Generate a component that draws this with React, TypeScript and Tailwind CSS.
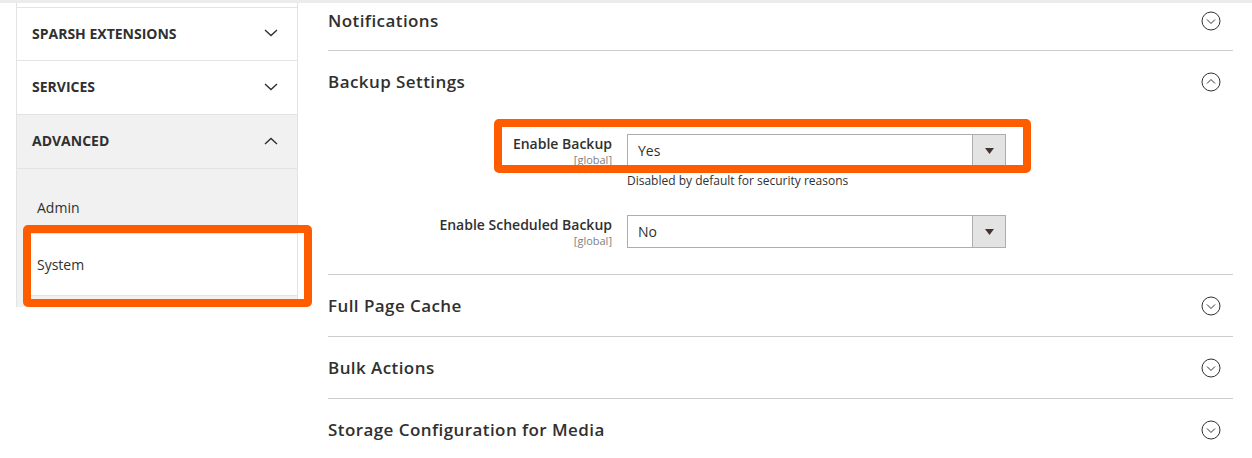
import React from 'react'

const Chevron = ({ up = false }: { up?: boolean }) => (
  <svg width="14" height="8" viewBox="0 0 14 8" fill="none" className="shrink-0">
    <path d={up ? 'M1 7L7 1.5L13 7' : 'M1 1L7 6.5L13 1'} stroke="#303030" strokeWidth="1.4" />
  </svg>
)

const CircleToggle = ({ up = false }: { up?: boolean }) => (
  <svg width="20" height="20" viewBox="0 0 20 20" fill="none" className="shrink-0">
    <circle cx="10" cy="10" r="9" stroke="#303030" strokeWidth="1" />
    <path d={up ? 'M6 11.5L10 7.5L14 11.5' : 'M6 8.5L10 12.5L14 8.5'} stroke="#303030" strokeWidth="1" />
  </svg>
)

const SideGroup = ({ label, open = false }: { label: string; open?: boolean }) => (
  <div className={`h-[54px] border-t border-[#e3e3e3] flex items-center justify-between pl-[15px] pr-[19px] pb-[2px] ${open ? 'bg-[#f1f1f1]' : 'bg-white'}`}>
    <span className="text-[14px] font-bold uppercase text-[#303030]">{label}</span>
    <Chevron up={open} />
  </div>
)

const Section = ({ title, open = false, top = false }: { title: string; open?: boolean; top?: boolean }) => (
  <div className={`h-[62px] flex items-center justify-between pr-[12px] ${top ? 'pt-[4px]' : 'border-t border-[#cccccc]'}`}>
    <span className="text-[17px] font-semibold text-[#303030] tracking-[0.025em]">{title}</span>
    <CircleToggle up={open} />
  </div>
)

const Select = ({ value }: { value: string }) => (
  <div className="w-[379px] h-[33px] border border-[#adadad] bg-white flex items-stretch">
    <span className="flex-1 flex items-center pl-[10px] text-[14px] text-[#303030]">{value}</span>
    <span className="w-[33px] bg-[#e3e3e3] border-l border-[#adadad] flex items-center justify-center">
      <svg width="9" height="6" viewBox="0 0 9 6">
        <path d="M0 0H9L4.5 6Z" fill="#41362f" />
      </svg>
    </span>
  </div>
)

const Field = ({ label, value, note }: { label: string; value: string; note?: string }) => (
  <div className="flex">
    <div className="w-[284px] flex flex-col items-end pt-[1px]">
      <span className="text-[14px] font-semibold text-[#303030] leading-[18px]">{label}</span>
      <span className="text-[11px] text-[#808080] leading-[14px]">[global]</span>
    </div>
    <div className="ml-[15px] flex flex-col">
      <Select value={value} />
      {note && <span className="mt-[6px] text-[12px] text-[#303030] leading-[16px]">{note}</span>}
    </div>
  </div>
)

export default function App() {
  return (
    <div className="w-[1252px] h-[458px] overflow-hidden bg-white font-['Open_Sans',sans-serif]">
      <div className="h-[3px] bg-[#ececec]" />
      <div className="flex items-start">
        {/* sidebar tabs */}
        <div className="relative ml-[16px] w-[282px] border-x border-[#e3e3e3] pt-[4px]">
          <div className="h-[53px] border-t border-[#e3e3e3] flex items-center justify-between pl-[15px] pr-[19px] pb-[2px]">
            <span className="text-[14px] font-bold uppercase text-[#303030]">Sparsh Extensions</span>
            <Chevron />
          </div>
          <SideGroup label="Services" />
          <SideGroup label="Advanced" open />
          <div className="border-t border-[#e3e3e3] bg-[#f1f1f1] pl-[13px] pb-[11px]">
            <div className="h-[64px] flex items-center pl-[7px] pt-[13px] text-[14px] text-[#303030]">Admin</div>
            <div className="h-[63px] bg-white border-y border-[#e3e3e3] flex items-center pl-[7px] text-[14px] text-[#303030]">System</div>
          </div>
          <div className="absolute left-[6px] top-[222px] w-[289px] h-[82px] border-[8px] border-[#ff5c00] rounded-[5px]" />
        </div>

        {/* config sections */}
        <div className="ml-[30px] w-[905px] -mt-[15px]">
          <Section title="Notifications" top />
          <Section title="Backup Settings" open />
          <div className="relative pt-[22px] pb-[26px] flex flex-col gap-[26px]">
            <Field label="Enable Backup" value="Yes" note="Disabled by default for security reasons" />
            <Field label="Enable Scheduled Backup" value="No" />
            <div className="absolute left-[166px] top-[7px] w-[537px] h-[54px] border-[8px] border-[#ff5c00] rounded-[5px]" />
          </div>
          <Section title="Full Page Cache" />
          <Section title="Bulk Actions" />
          <Section title="Storage Configuration for Media" />
        </div>
      </div>
    </div>
  )
}
